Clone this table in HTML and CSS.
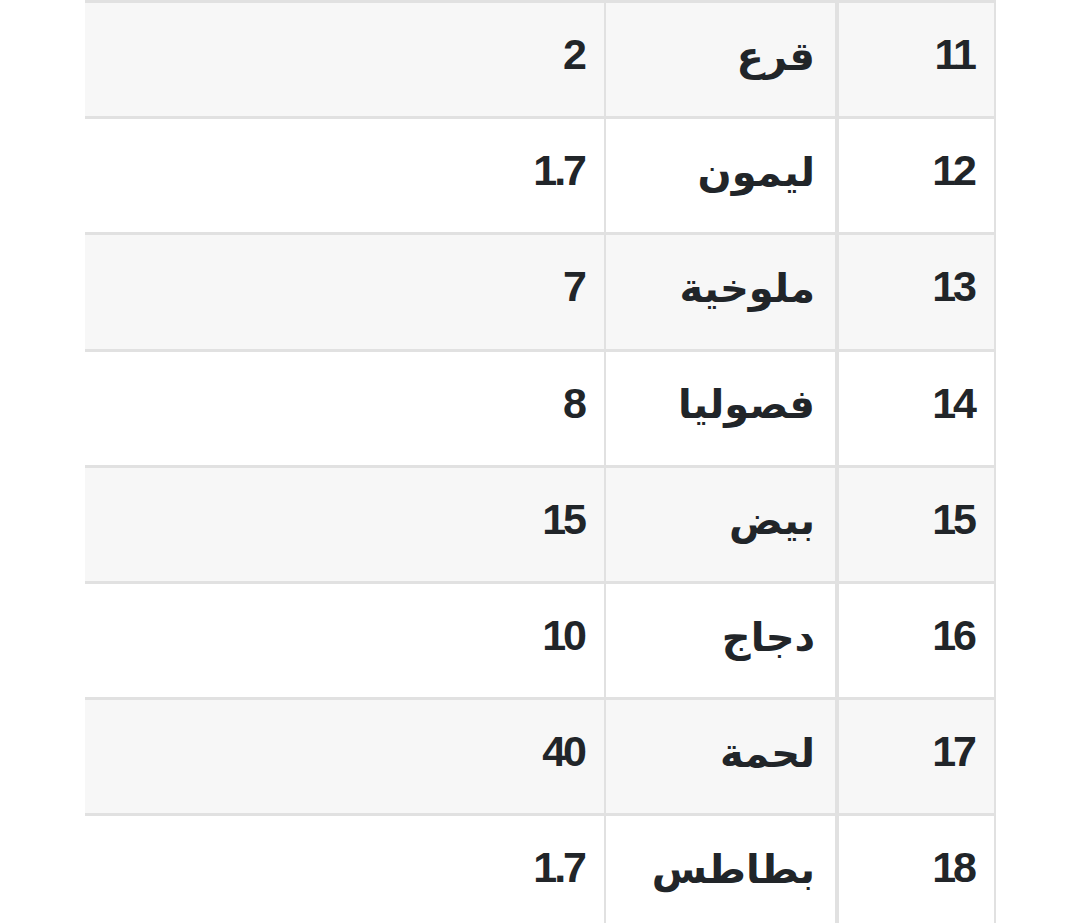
FILE: index.html
```html
<!DOCTYPE html>
<html lang="ar" dir="rtl">
<head>
<meta charset="utf-8">
<link rel="stylesheet" href="styles.css">
</head>
<body>
<div class="wrap">
<table class="grid">
<tbody>
<tr class="odd"><td class="num">11</td><td class="name">قرع</td><td class="val">2</td></tr>
<tr><td class="num">12</td><td class="name">ليمون</td><td class="val">1.7</td></tr>
<tr class="odd"><td class="num">13</td><td class="name">ملوخية</td><td class="val">7</td></tr>
<tr><td class="num">14</td><td class="name">فصوليا</td><td class="val">8</td></tr>
<tr class="odd"><td class="num">15</td><td class="name">بيض</td><td class="val">15</td></tr>
<tr><td class="num">16</td><td class="name">دجاج</td><td class="val">10</td></tr>
<tr class="odd"><td class="num">17</td><td class="name">لحمة</td><td class="val">40</td></tr>
<tr><td class="num">18</td><td class="name">بطاطس</td><td class="val">1.7</td></tr>
</tbody>
</table>
</div>
</body>
</html>
```
FILE: styles.css
```css
html, body {
  margin: 0;
  padding: 0;
  background: #ffffff;
}
body {
  font-family: "Liberation Sans", "Noto Sans", "DejaVu Sans", sans-serif;
  color: #212529;
  overflow: hidden;
  height: 923px;
}
.wrap {
  padding-right: 84px;
  padding-left: 85px;
}
.grid {
  width: 911px;
  border-collapse: collapse;
  direction: rtl;
  border-top: 3px solid #e1e1e1;
  border-right: 2px solid #e1e1e1;
}
.grid td {
  height: 103.2px;
  padding: 0 20px 10px 20px;
  text-align: right;
  vertical-align: middle;
  font-size: 43px;
  font-weight: 700;
  line-height: 1;
  letter-spacing: -3px;
  border-bottom: 3px solid #e1e1e1;
  box-sizing: content-box;
}
.grid tr.odd td {
  background: #f7f7f7;
}
.grid td.num {
  width: 115px;
  border-left: 4px solid #e1e1e1;
}
.grid td.name {
  width: 189px;
  border-left: 2px solid #e1e1e1;
  font-family: "Noto Sans", "DejaVu Sans", sans-serif;
  font-size: 40px;
  font-weight: 700;
  letter-spacing: 0;
}
```
